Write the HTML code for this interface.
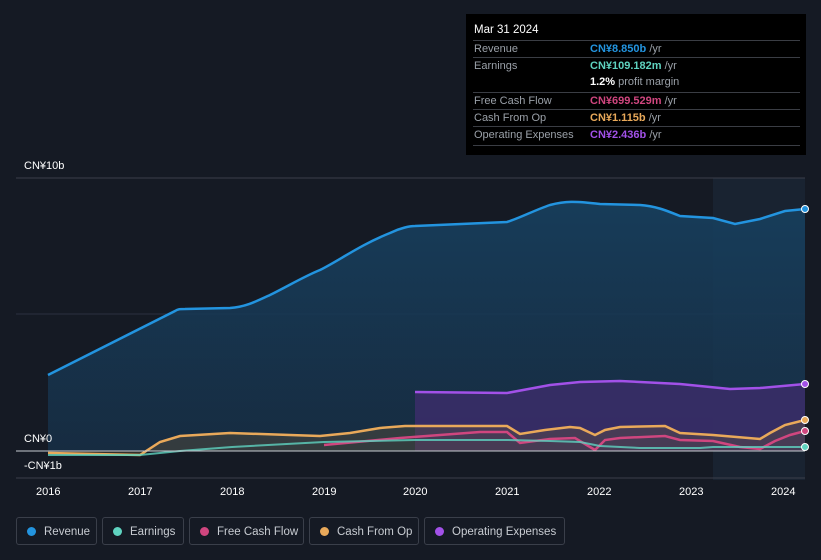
<!DOCTYPE html>
<html><head><meta charset="utf-8"><style>
body{margin:0;width:821px;height:560px;background:#151a24;font-family:"Liberation Sans",sans-serif;overflow:hidden;position:relative}
.tip{position:absolute;left:466px;top:14px;width:340px;height:141px;background:#000;color:#fff;font-size:11px}
.tip .h{position:absolute;left:8px;top:10px;font-size:11.5px}
.row{position:absolute;left:7px;width:327px;border-top:1px solid #3a3d44;height:17px}
.row span.l{position:absolute;left:1px;top:2px;color:#9aa0a8}
.row span.v{position:absolute;left:117px;top:2px;font-weight:bold}
.row span.v i{font-style:normal;font-weight:normal;color:#9aa0a8}
.ax{position:absolute;color:#fff;font-size:11px}
.leg{position:absolute;top:517px;height:28px;border:1px solid #3a3f4a;border-radius:3px;color:#c8ccd2;font-size:11.5px;line-height:28px;box-sizing:border-box;padding-left:27px}
.leg b{position:absolute;left:10px;top:9px;width:9px;height:9px;border-radius:50%}
</style></head><body>
<svg width="821" height="560" style="position:absolute;left:0;top:0">
<defs><linearGradient id="rg" x1="0" y1="0" x2="0" y2="1"><stop offset="0" stop-color="#17405f" stop-opacity=".9"/><stop offset="1" stop-color="#173048" stop-opacity=".8"/></linearGradient></defs>
<rect x="713" y="178" width="92" height="302" fill="#1c2a3a" opacity=".6"/>
<line x1="16" y1="178" x2="805" y2="178" stroke="#3a3f4a"/>
<line x1="16" y1="314" x2="805" y2="314" stroke="#2a3040"/>
<line x1="16" y1="478" x2="805" y2="478" stroke="#3a3f4a"/>
<path d="M48,375 L175,311 C178,309 180,309 185,309 L230,308 C245,307 255,302 270,295 C290,285 305,276 320,270 C340,260 360,245 390,233 C400,228 410,226 415,226 L507,222 C520,218 535,210 550,205 C565,201 575,201 600,204 L640,205 C655,206 665,210 680,216 L713,218 L735,224 L760,219 L785,211 L805,209 L805,451 L48,451Z" fill="url(#rg)"/>
<path d="M48,375 L175,311 C178,309 180,309 185,309 L230,308 C245,307 255,302 270,295 C290,285 305,276 320,270 C340,260 360,245 390,233 C400,228 410,226 415,226 L507,222 C520,218 535,210 550,205 C565,201 575,201 600,204 L640,205 C655,206 665,210 680,216 L713,218 L735,224 L760,219 L785,211 L805,209" fill="none" stroke="#2394df" stroke-width="2.5"/>
<path d="M415,392 L507,393 L550,385 L580,382 L620,381 L680,384 L730,389 L760,388 L805,384 L805,451 L415,451Z" fill="#3b2d6a" opacity=".85"/>
<path d="M415,392 L507,393 L550,385 L580,382 L620,381 L680,384 L730,389 L760,388 L805,384" fill="none" stroke="#a251e8" stroke-width="2.5"/>
<path d="M48,453 L140,455 L160,442 L180,436 L230,433 L290,435 L320,436 L350,433 L380,428 L405,426 L507,426 L520,434 L545,430 L570,427 L580,428 L595,435 L605,430 L620,427 L665,426 L680,433 L713,435 L760,439 L770,433 L785,425 L805,420 L805,451 L48,451Z" fill="#6b5a3a" opacity=".35"/>
<path d="M48,453 L140,455 L160,442 L180,436 L230,433 L290,435 L320,436 L350,433 L380,428 L405,426 L507,426 L520,434 L545,430 L570,427 L580,428 L595,435 L605,430 L620,427 L665,426 L680,433 L713,435 L760,439 L770,433 L785,425 L805,420" fill="none" stroke="#e9a95a" stroke-width="2.5"/>
<path d="M324,445 L400,438 L480,432 L507,432 L520,443 L550,439 L575,438 L595,450 L605,440 L620,438 L665,436 L680,440 L713,441 L740,447 L760,449 L775,441 L790,435 L805,431" fill="none" stroke="#d0467f" stroke-width="2.5"/>
<path d="M48,455 L140,455 L180,451 L232,447 L324,442 L415,440 L507,440 L550,441 L580,442 L600,446 L640,448 L700,448 L713,447 L805,447" fill="none" stroke="#5fd3c0" stroke-width="2" opacity=".8"/>
<line x1="16" y1="451" x2="805" y2="451" stroke="#c8ccd2" stroke-width="1"/>
<circle cx="805" cy="209" r="3.5" fill="#2394df" stroke="#fff"/>
<circle cx="805" cy="384" r="3.5" fill="#a251e8" stroke="#fff"/>
<circle cx="805" cy="420" r="3.5" fill="#e9a95a" stroke="#fff"/>
<circle cx="805" cy="431" r="3.5" fill="#d0467f" stroke="#fff"/>
<circle cx="805" cy="447" r="3.5" fill="#5fd3c0" stroke="#fff"/>
</svg>
<div class="ax" style="left:24px;top:160px">CN¥10b</div>
<div class="ax" style="left:24px;top:433px">CN¥0</div>
<div class="ax" style="left:24px;top:460px">-CN¥1b</div>
<div class="ax" style="left:36px;top:486px">2016</div>
<div class="ax" style="left:128px;top:486px">2017</div>
<div class="ax" style="left:220px;top:486px">2018</div>
<div class="ax" style="left:312px;top:486px">2019</div>
<div class="ax" style="left:403px;top:486px">2020</div>
<div class="ax" style="left:495px;top:486px">2021</div>
<div class="ax" style="left:587px;top:486px">2022</div>
<div class="ax" style="left:679px;top:486px">2023</div>
<div class="ax" style="left:771px;top:486px">2024</div>
<div class="tip"><div class="h">Mar 31 2024</div>
<div class="row" style="top:26px"><span class="l">Revenue</span><span class="v" style="color:#2394df">CN¥8.850b <i>/yr</i></span></div>
<div class="row" style="top:43px"><span class="l">Earnings</span><span class="v" style="color:#5fd3c0">CN¥109.182m <i>/yr</i></span></div>
<div class="row" style="top:60px;border:none"><span class="v" style="color:#fff">1.2% <i>profit margin</i></span></div>
<div class="row" style="top:78px"><span class="l">Free Cash Flow</span><span class="v" style="color:#d0467f">CN¥699.529m <i>/yr</i></span></div>
<div class="row" style="top:95px"><span class="l">Cash From Op</span><span class="v" style="color:#e9a95a">CN¥1.115b <i>/yr</i></span></div>
<div class="row" style="top:112px;height:18px;border-bottom:1px solid #3a3d44"><span class="l">Operating Expenses</span><span class="v" style="color:#a251e8">CN¥2.436b <i>/yr</i></span></div>
</div>
<div class="leg" style="left:16px;width:81px"><b style="background:#2394df"></b>Revenue</div>
<div class="leg" style="left:102px;width:82px"><b style="background:#5fd3c0"></b>Earnings</div>
<div class="leg" style="left:189px;width:115px"><b style="background:#d0467f"></b>Free Cash Flow</div>
<div class="leg" style="left:309px;width:110px"><b style="background:#e9a95a"></b>Cash From Op</div>
<div class="leg" style="left:424px;width:141px"><b style="background:#a251e8"></b>Operating Expenses</div>
</body></html>
